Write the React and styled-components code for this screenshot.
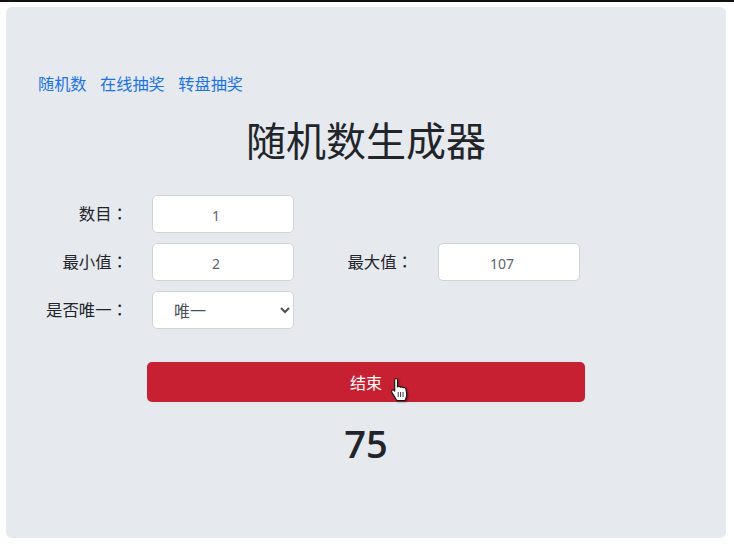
import React from "react";
import styled, { createGlobalStyle } from "styled-components";

const GlobalStyle = createGlobalStyle`
    html, body {
        margin: 0;
        padding: 0;
        background: #fff;
    }
    body {
        font-family: "Noto Sans", "Noto Sans CJK SC", sans-serif;
        color: #212529;
    }
`;

const Page = styled.div`
    width: 734px;
    height: 544px;
    box-sizing: border-box;
    border-top: 2px solid #111;
    padding: 5px 8px 6px 6px;
`;

const Panel = styled.main`
    height: 531px;
    box-sizing: border-box;
    padding: 64px 0 0 32px;
    background: #e6e9ee;
    border-radius: 6px;
`;

const Nav = styled.nav`
    display: flex;
    gap: 13.5px;
    height: 24px;
    align-items: center;
`;

const NavLink = styled.a`
    color: #1b74e4;
    font-size: 16.2px;
    font-family: "Noto Sans CJK SC", sans-serif;
    line-height: 24px;
    text-decoration: none;
`;

const Title = styled.h1`
    width: 656px;
    margin: 16px 0 28px;
    font-family: "Noto Sans CJK SC", sans-serif;
    font-size: 40px;
    font-weight: 400;
    line-height: 56px;
    text-align: center;
`;

const Form = styled.form`
    display: flex;
    flex-direction: column;
    gap: 10px;
`;

const Row = styled.div`
    display: flex;
    align-items: center;
`;

const Label = styled.label`
    width: ${(p) => p.$width}px;
    box-sizing: border-box;
    padding-right: ${(p) => p.$pad}px;
    margin-top: -3px;
    font-family: "Noto Sans CJK SC", sans-serif;
    font-size: 16.4px;
    line-height: 24px;
    text-align: right;
    white-space: nowrap;
`;

const Colon = styled.span`
    font-family: "Noto Sans CJK TC", sans-serif;
`;

const Input = styled.input`
    width: 142px;
    height: 38px;
    box-sizing: border-box;
    padding: 8px 26px 6px 12px;
    background: #fff;
    border: 1px solid #ced4da;
    border-radius: 5px;
    color: #5c636a;
    font-family: "Noto Sans", sans-serif;
    font-size: 14px;
    text-align: center;
`;

const Select = styled.select`
    width: 142px;
    height: 38px;
    box-sizing: border-box;
    padding: 0 0 0 17px;
    background: #fff;
    border: 1px solid #ced4da;
    border-radius: 5px;
    color: #495057;
    font-family: "Noto Sans CJK SC", sans-serif;
    font-size: 16px;
`;

const ActionWrap = styled.div`
    width: 438px;
    margin: 33px 0 0 109px;
    position: relative;
`;

const ActionButton = styled.button`
    display: block;
    width: 100%;
    height: 40px;
    background: #c82033;
    border: 0;
    border-radius: 5px;
    color: #fff;
    font-family: "Noto Sans CJK SC", sans-serif;
    font-size: 16px;
`;

const Pointer = styled.svg`
    position: absolute;
    left: 244px;
    top: 16px;
    width: 17px;
    height: 24px;
    filter: drop-shadow(1px 1px 1px rgba(0, 0, 0, 0.45));
`;

const Result = styled.div`
    width: 656px;
    margin-top: 13px;
    font-family: "Open Sans", sans-serif;
    font-size: 38px;
    font-weight: 600;
    line-height: 56px;
    text-align: center;
`;

function FieldLabel({ width, pad, children }) {
    return (
        <Label $width={width} $pad={pad}>
            {children}
            <Colon>：</Colon>
        </Label>
    );
}

function App() {
    return (
        <Page>
            <GlobalStyle />
            <Panel>
                <Nav>
                    <NavLink href="#">随机数</NavLink>
                    <NavLink href="#">在线抽奖</NavLink>
                    <NavLink href="#">转盘抽奖</NavLink>
                </Nav>
                <Title>随机数生成器</Title>
                <Form>
                    <Row>
                        <FieldLabel width={114} pad={24}>数目</FieldLabel>
                        <Input defaultValue="1" />
                    </Row>
                    <Row>
                        <FieldLabel width={114} pad={24}>最小值</FieldLabel>
                        <Input defaultValue="2" />
                        <FieldLabel width={144} pad={25}>最大值</FieldLabel>
                        <Input defaultValue="107" />
                    </Row>
                    <Row>
                        <FieldLabel width={114} pad={24}>是否唯一</FieldLabel>
                        <Select defaultValue="unique">
                            <option value="unique">唯一</option>
                        </Select>
                    </Row>
                </Form>
                <ActionWrap>
                    <ActionButton type="button">结束</ActionButton>
                    <Pointer viewBox="0 0 16 24" preserveAspectRatio="none">
                        <path
                            d="M3.500 2.200C3.500 1 4 .5 4.800 .5S6.100 1 6.100 2.200V9C6.800 8.200 8.300 8.300 8.800 9.300C9.500 8.600 11 8.800 11.400 9.800C12.200 9.300 13.800 9.700 14 11L14.700 16C14.900 18.500 14.200 20.500 13.200 22.500H5.500L1 14.500C.2 13 .8 12 1.600 11.900C2.300 11.800 3 12.400 3.500 13.200Z"
                            fill="#fff"
                            stroke="#111"
                            strokeWidth="1"
                            strokeLinejoin="round"
                        />
                        <path d="M6.800 14v5M9 14v5M11.300 14v5" stroke="#111" strokeWidth="0.8" fill="none" />
                    </Pointer>
                </ActionWrap>
                <Result>75</Result>
            </Panel>
        </Page>
    );
}

export default App;
